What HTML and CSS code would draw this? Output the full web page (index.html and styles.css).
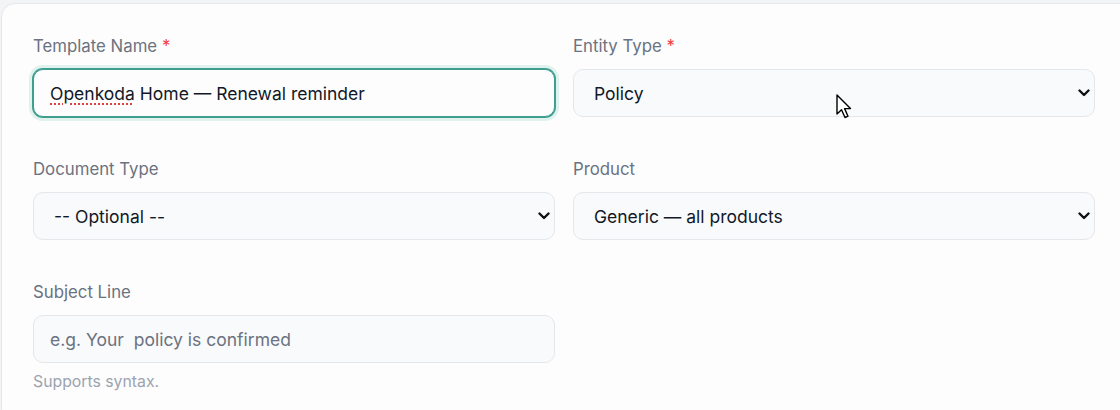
FILE: index.html
```html
<!DOCTYPE html>
<html lang="en">
<head>
<meta charset="utf-8">
<title>Template form</title>
<link rel="stylesheet" href="styles.css">
</head>
<body>
<div class="card">
  <div class="form-grid">
    <div class="field">
      <label class="label">Template Name <span class="req">*</span></label>
      <div class="input focused"><span class="misspelled">Openkoda</span> Home — Renewal reminder</div>
    </div>
    <div class="field">
      <label class="label">Entity Type <span class="req">*</span></label>
      <div class="select-wrap">
        <select class="select"><option>Policy</option></select>
        <svg class="chev" width="12" height="8" viewBox="0 0 12 8"><path d="M1.5 1.5 L6 6 L10.5 1.5" fill="none" stroke="#111" stroke-width="2.4" stroke-linecap="round" stroke-linejoin="round"/></svg>
      </div>
    </div>
    <div class="field">
      <label class="label">Document Type</label>
      <div class="select-wrap">
        <select class="select"><option>-- Optional --</option></select>
        <svg class="chev" width="12" height="8" viewBox="0 0 12 8"><path d="M1.5 1.5 L6 6 L10.5 1.5" fill="none" stroke="#111" stroke-width="2.4" stroke-linecap="round" stroke-linejoin="round"/></svg>
      </div>
    </div>
    <div class="field">
      <label class="label">Product</label>
      <div class="select-wrap">
        <select class="select"><option>Generic — all products</option></select>
        <svg class="chev" width="12" height="8" viewBox="0 0 12 8"><path d="M1.5 1.5 L6 6 L10.5 1.5" fill="none" stroke="#111" stroke-width="2.4" stroke-linecap="round" stroke-linejoin="round"/></svg>
      </div>
    </div>
    <div class="field">
      <label class="label">Subject Line</label>
      <input class="input plain" type="text" placeholder="e.g. Your  policy is confirmed">
      <div class="help">Supports syntax.</div>
    </div>
  </div>
  <svg class="cursor" width="18" height="27" viewBox="0 0 18 27"><path d="M1 1 L1 20 L5.5 15.8 L9 23.5 L12 22.2 L8.6 14.6 L14.5 14.6 Z" fill="#fff" stroke="#000" stroke-width="1.4" stroke-linejoin="round"/></svg>
</div>
</body>
</html>
```

FILE: styles.css
```css
html, body {
  margin: 0;
  padding: 0;
}
body {
  background: #f3f4f6;
  font-family: Inter, "Noto Sans", "Liberation Sans", sans-serif;
  overflow: hidden;
  height: 410px;
}
.card {
  position: relative;
  box-sizing: border-box;
  height: 420px;
  margin: 3px -40px 0 1px;
  background: #fdfdfd;
  border: 1px solid #e5e7eb;
  border-radius: 14px;
  padding: 30px 31px 0;
}
.form-grid {
  display: grid;
  grid-template-columns: 522px 522px;
  column-gap: 18px;
  row-gap: 40px;
  align-items: start;
}
.field {
  display: flex;
  flex-direction: column;
}
.label {
  font-size: 16.8px;
  line-height: 24px;
  color: #6b7280;
  margin-bottom: 11px;
}
.req {
  color: #ef4444;
}
.input,
.select {
  box-sizing: border-box;
  height: 48px;
  width: 100%;
  border: 1px solid #e5e7eb;
  border-radius: 10px;
  background: #f9fafb;
  font-family: inherit;
  font-size: 17.5px;
  color: #111827;
  padding: 0 16px;
  outline: none;
}
.input.focused {
  display: flex;
  align-items: center;
  background: #fdfdfd;
  border: 1px solid #3f9e90;
  box-shadow: 0 0 0 1px #3f9e90, 0 0 0 4px #dff2ee;
  white-space: pre;
}
.misspelled {
  text-decoration: underline dotted #e0413f;
  text-decoration-thickness: 1.5px;
  text-underline-offset: 4px;
}
.input.plain::placeholder {
  color: #6b7280;
}
.select-wrap {
  position: relative;
}
.select {
  appearance: none;
  -webkit-appearance: none;
  padding-left: 20px;
  display: block;
}
.chev {
  position: absolute;
  right: 5px;
  top: 20px;
  pointer-events: none;
}
.help {
  margin-top: 9px;
  font-size: 15.8px;
  line-height: 20px;
  color: #9ca3af;
}
.cursor {
  position: absolute;
  left: 834px;
  top: 90px;
}
```
